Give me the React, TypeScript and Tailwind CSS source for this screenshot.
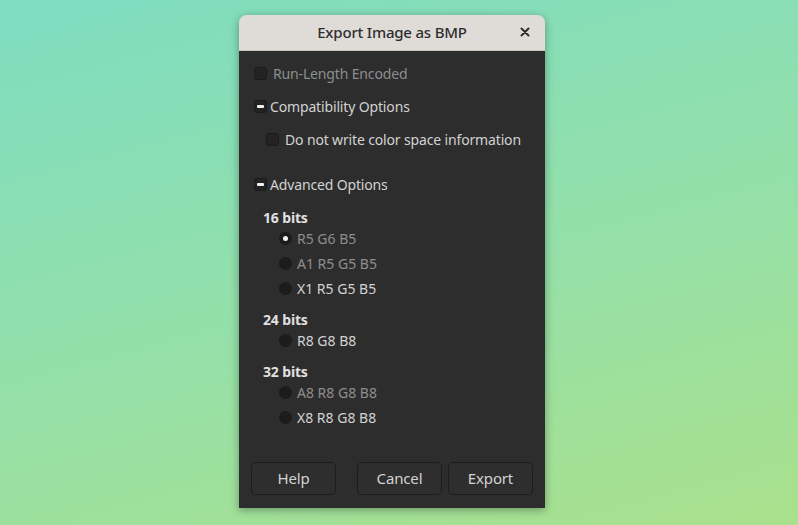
import React from "react";

const Check = ({ mixed }: { mixed?: boolean }) => (
  <span className="w-[13px] h-[13px] rounded-[3px] bg-[#232323] border border-[#1b1b1b] flex items-center justify-center shrink-0">
    {mixed && <span className="w-[7px] h-[3px] bg-[#f2f2f2] rounded-[1px]" />}
  </span>
);

const Radio = ({ on }: { on?: boolean }) => (
  <span className="w-[13px] h-[13px] rounded-full bg-[#1c1c1c] flex items-center justify-center shrink-0">
    {on && <span className="w-[5px] h-[5px] rounded-full bg-[#f4f4f4]" />}
  </span>
);

const RadioRow = ({ label, on, dim }: { label: string; on?: boolean; dim?: boolean }) => (
  <div className="h-[25px] flex items-center pl-[40px]">
    <Radio on={on} />
    <span className={`ml-[5px] tracking-normal ${dim ? "text-[#8e8e8e]" : "text-[#d2d2d2]"}`}>{label}</span>
  </div>
);

const Btn = ({ label }: { label: string }) => (
  <button className="w-[85px] h-[33px] rounded-[5px] border border-[#1c1c1c] bg-[#2e2e2e] text-[#d2d2d2] text-[15px] flex items-center justify-center">
    {label}
  </button>
);

export default function App() {
  return (
    <div
      className="w-[798px] h-[525px] bg-[linear-gradient(165deg,#7edcc1_0%,#95e0a8_55%,#aae08c_100%)] pl-[239px] pt-[15px]"
      style={{ fontFamily: '"Noto Sans", "Open Sans", sans-serif' }}
    >
      <div className="w-[306px] h-[493px] flex flex-col rounded-t-[8px] overflow-hidden shadow-[0_2px_8px_rgba(0,0,0,0.35)]">
        <div className="h-[36px] bg-[#dfdcd8] relative flex items-center justify-center border-b border-[#c8c5c1]">
          <span className="text-[15px] font-medium text-[#2e2e2e] tracking-[-0.2px]">Export Image as BMP</span>
          <span className="absolute right-[12px] top-[9px] w-[16px] h-[16px] flex items-center justify-center">
            <svg width="10" height="10" viewBox="0 0 10 10">
              <path d="M1.5 1.5 L8.5 8.5 M8.5 1.5 L1.5 8.5" stroke="#2e2e2e" strokeWidth="2" strokeLinecap="round" />
            </svg>
          </span>
        </div>
        <div className="flex-1 bg-[#2d2d2d] flex flex-col text-[14px] tracking-[-0.15px] text-[#d2d2d2] pb-[13px]">
          <div className="h-[25px] mt-[10px] flex items-center pl-[15px]">
            <Check />
            <span className="ml-[6px] text-[#8e8e8e]">Run-Length Encoded</span>
          </div>
          <div className="h-[25px] mt-[8px] flex items-center pl-[15px]">
            <Check mixed />
            <span className="ml-[3px]">Compatibility Options</span>
          </div>
          <div className="h-[25px] mt-[8px] flex items-center pl-[27px]">
            <Check />
            <span className="ml-[6px]">Do not write color space information</span>
          </div>
          <div className="h-[25px] mt-[20px] flex items-center pl-[15px]">
            <Check mixed />
            <span className="ml-[3px]">Advanced Options</span>
          </div>
          <div className="h-[18px] mt-[11px] flex items-center pl-[24px] font-bold text-[#e0e0e0]">16 bits</div>
          <RadioRow label="R5 G6 B5" on dim />
          <RadioRow label="A1 R5 G5 B5" dim />
          <RadioRow label="X1 R5 G5 B5" />
          <div className="h-[18px] mt-[9px] flex items-center pl-[24px] font-bold text-[#e0e0e0]">24 bits</div>
          <RadioRow label="R8 G8 B8" />
          <div className="h-[18px] mt-[9px] flex items-center pl-[24px] font-bold text-[#e0e0e0]">32 bits</div>
          <RadioRow label="A8 R8 G8 B8" dim />
          <RadioRow label="X8 R8 G8 B8" />
          <div className="mt-auto flex pl-[12px]">
            <Btn label="Help" />
            <div className="ml-[21px]"><Btn label="Cancel" /></div>
            <div className="ml-[6px]"><Btn label="Export" /></div>
          </div>
        </div>
      </div>
    </div>
  );
}
